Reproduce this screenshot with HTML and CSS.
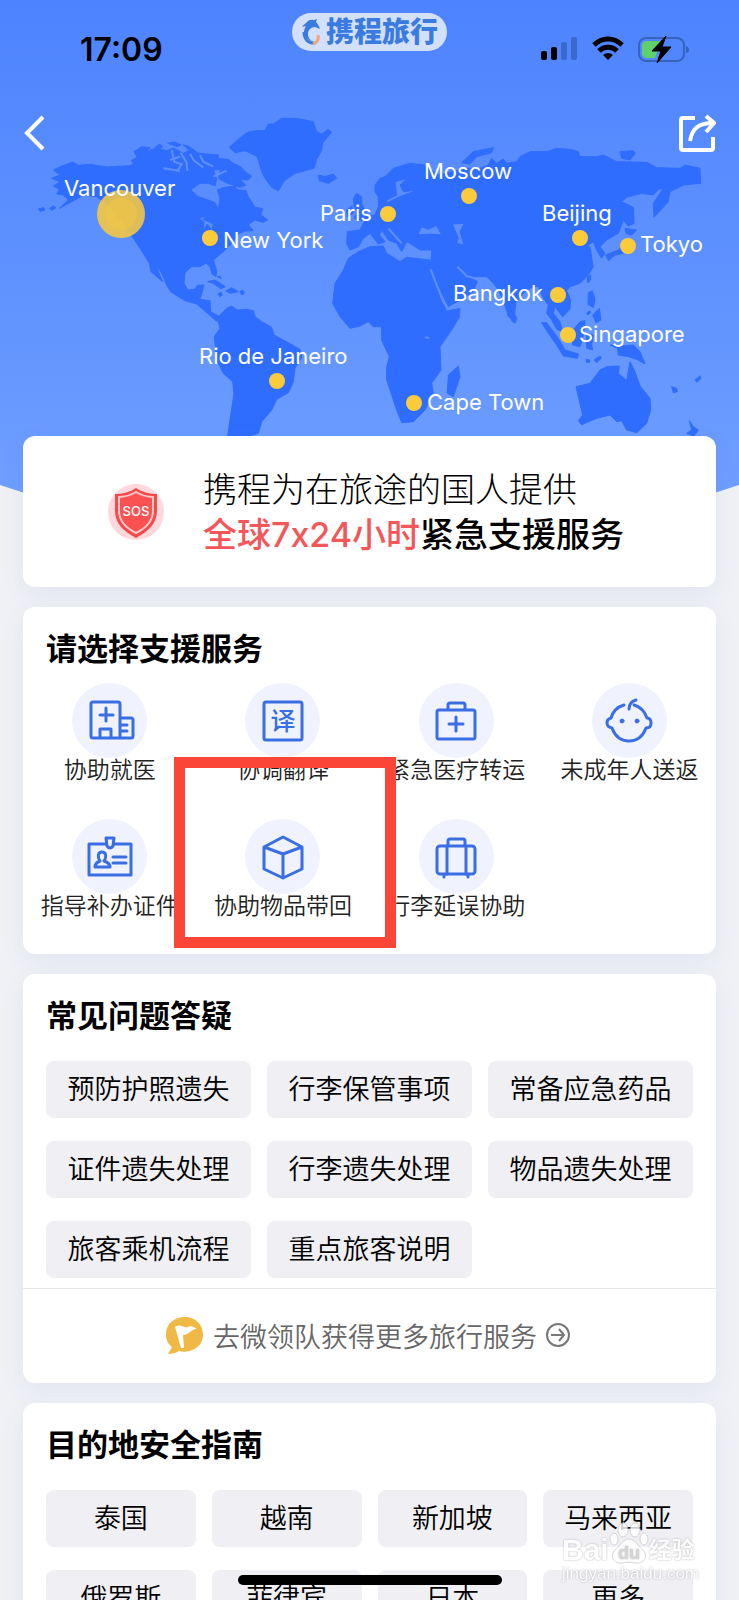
FILE: index.html
```html
<!DOCTYPE html>
<html lang="zh-CN">

<head>
    <meta charset="UTF-8">
    <meta name="viewport" content="width=device-width, initial-scale=1.0">
    <title>全球紧急支援服务</title>
    <link rel="stylesheet" href="styles.css">
</head>

<body>
    <header class="hero">
        <div class="status-bar">
            <span class="time">17:09</span>
            <div class="app-pill">
                <svg width="20" height="26" viewBox="0 0 20 26">
                    <path d="M1 8C2 6 4 5 5 4c2-3 5-4 8-3l3-1-1 3c2 2 3 4 4 7l-5-2c-4 0-7 3-7 7 0 3 1 5 4 7-5-1-8-5-8-9 0-3 1-4 2-6z" fill="#3a7be0" />
                    <path d="M3 13c0 7 4 11 10 11" fill="none" stroke="#3a7be0" stroke-width="3" />
                    <path d="M17 16c1 4 0 7-5 9" fill="none" stroke="#f0a57c" stroke-width="3" />
                </svg>
                <span>携程旅行</span>
            </div>
            <div class="status-icons">
                <svg width="37" height="25" viewBox="0 0 37 25">
                    <rect x="0" y="15" width="6" height="9" rx="2" />
                    <rect x="10" y="11" width="6" height="13" rx="2" />
                    <rect x="20" y="6" width="6" height="18" rx="2" fill="#3a68cc" />
                    <rect x="30" y="1" width="6" height="23" rx="2" fill="#3a68cc" />
                </svg>
                <svg width="32" height="25" viewBox="0 0 32 25" fill="none" stroke="#000" stroke-width="5">
                    <path d="M2 9c8-8 20-8 28 0" />
                    <path d="M7 15c5-5 13-5 18 0" />
                    <path d="M11 19q5-4 10 0l-5 5z" fill="#000" stroke="none" />
                </svg>
                <svg width="52" height="27" viewBox="0 0 52 27">
                    <rect x="1" y="2" width="45" height="23" rx="7" fill="none" stroke="#3563bd" stroke-width="2" />
                    <path d="M9 5h14l-6 17H9q-5 0-5-5v-7q0-5 5-5z" fill="#5fd16a" />
                    <path d="M48 10q3 1 3 4t-3 3z" fill="#3563bd" />
                    <path d="M28 0L14 15h9l-4 12 14-16h-9z" stroke="#000" stroke-width="1" />
                </svg>
            </div>
        </div>

        <!-- World map with city pins -->
        <svg class="map" viewBox="0 0 739 336">
            <svg width="739" height="336" viewBox="0 0 2217 1008">
                <g class="land">
                    <path fill-rule="evenodd" d="M160 210L185 198 218 186 235 196 270 193 320 201 390 197 402 190 393 182 412 172 402 155 425 140 450 143 440 155 470 143 500 152 520 144 550 160 565 152 600 160 655 165 655 175 685 178 700 190 722 200 735 215 755 228 745 240 720 238 737 256 720 262 700 256 715 270 738 272 745 290 765 322 788 326 783 344 803 360 790 367 765 360 745 374 760 392 735 393 715 402 700 425 670 455 640 480 650 512 648 530 636 522 630 500 618 489 600 500 575 500 555 518 552 550 563 570 585 568 592 556 612 555 606 578 600 598 630 602 632 635 650 645 665 655 658 662 645 660 625 642 605 625 590 612 555 602 535 590 512 575 500 555 485 520 465 490 488 545 470 530 453 515 448 490 430 460 400 415 370 370 330 320 290 290 250 285 210 308 178 325 205 300 190 285 170 282 178 268 160 258 180 245 155 235 180 225ZM572 270L600 250 625 250 645 258 650 238 640 208 662 210 655 235 682 250 712 258 672 262 652 270 660 295 655 328 645 308 620 298 595 290ZM595 355L620 348 610 358 640 372 635 392 622 372 610 390 612 365Z" />
                    <path d="M465 142l15-10 8 8-12 10zM503 130l20-4 20 8-10 6zM550 135l15 3 25 18-15 2zM115 327l16-4 4 7-14 4zM148 325l12-7 8 5-12 8z" />
                    <path d="M688 142L715 118 740 98 765 92 795 92 805 72 820 72 845 55 890 55 940 65 950 95 965 102 985 88 995 97 968 128 965 150 950 178 942 205 885 220 852 243 835 273 815 262 795 235 785 215 772 170 735 152 705 158Z" />
                    <path d="M955 225L975 230 1000 222 1010 235 985 250 958 242Z" />
                    <path d="M623 545L645 540 676 560 662 566 640 550ZM678 573L695 563 715 575 690 580ZM720 575l8-5 5 10-8 5zM655 580l8-3 4 8-8 5zM652 530l8-2 4 8z" />
                    <path d="M645 660L680 625 695 618 712 630 740 628 760 632 765 650 785 665 815 682 822 705 865 728 900 748 905 772 885 805 880 845 865 878 830 898 815 930 800 948 785 965 775 1000 750 1008 683 1008 690 960 702 880 698 845 670 820 650 780 643 710 660 685 655 665Z" />
                </g>
                <g class="land" transform="translate(1110 0)">
                    <path fill-rule="evenodd" d="M15 255L30 235 45 230 70 205 120 190 165 195 205 225 245 215 290 205 330 205 355 195 365 175 380 190 400 177 410 190 440 185 450 170 480 155 530 155 560 145 600 148 625 155 630 170 680 170 700 165 740 185 830 187 860 203 930 205 945 195 990 205 992 250 940 255 900 275 895 305 852 352 850 310 880 265 865 268 850 285 815 280 770 292 755 305 790 322 792 370 775 378 760 360 745 400 710 420 690 440 705 460 695 475 680 450 670 425 655 435 662 450 665 475 670 500 655 525 630 550 600 560 590 572 602 600 600 628 578 650 562 630 555 618 550 640 570 665 578 695 560 688 545 660 530 640 535 615 520 595 505 560 490 560 470 570 438 605 432 660 415 650 400 600 385 570 370 550 350 530 300 530 322 545 310 575 270 600 235 620 215 580 182 505 185 450 150 450 120 430 110 425 95 455 80 430 55 420 35 390 28 405 45 425 25 432 0 400 -20 415 -35 440 -60 450 -70 430 -68 395 -30 390 -20 370 -10 350 15 345 25 320 25 290 15 275ZM143 405L155 380 175 388 200 376 215 405 180 402ZM247 372L283 370 270 395 282 435 260 430 265 415ZM75 245L112 235 90 255 100 275 142 270 90 290 48 310 50 300 80 285Z" />
                    <path d="M-35 455L0 440 40 438 50 460 90 485 110 472 180 480 182 510 215 605 232 633 270 625 268 652 245 690 210 740 213 810 185 850 190 880 165 930 130 965 95 968 80 930 50 840 50 800 58 770 35 720 35 680 10 680 -5 665 -30 678 -60 685 -90 650 -112 610 -105 550 -80 510 -65 475Z" />
                    <path d="M-50 295L-40 280 -25 290 -25 310 -8 350 -25 362 -48 355 -38 335 -48 320ZM-70 330L-55 318 -50 340 -68 350Z" />
                    <path d="M275 188L310 155 370 143 365 158 320 170 300 192ZM750 155L790 152 796 160 780 180 755 175Z" />
                    <path d="M765 385L800 390 785 405 768 400ZM755 440L760 460 735 465 715 482 707 465 745 450ZM652 530l10-5 0 12-8 12zM655 578l12-5 8 25-5 25-16-10zM668 645l20-20 5 35-15 8zM650 640l8-8 4 5-8 8z" />
                    <path d="M515 668L530 668 565 715 585 750 625 762 622 775 580 768 560 735 535 700ZM605 695L630 665 645 662 640 705 630 740 608 735ZM650 700L670 705 665 735 668 750 650 745ZM648 778l12 2-2 7-8 0zM672 780l18-12 5 5-15 15z" />
                    <path d="M720 735L760 738 790 735 810 755 825 792 800 778 775 770 745 765 742 745ZM905 860l15 5 2 10-12 3zM975 840l15-13 3 8-12 12z" />
                    <path d="M618 860L660 850 690 810 710 800 748 798 745 820 770 842 780 785 795 815 810 858 840 895 842 930 830 970 800 998 770 990 755 962 740 965 720 945 680 955 635 974 625 962 638 945ZM958 962L970 980 985 990 972 1008 950 1000 965 990ZM265 798L270 830 250 890 232 880 235 825Z" />
                    <path d="M415 630l15 5 10 20-4 14-10-5z" />
                    <path class="water" d="M182 508L200 555 220 605M228 628L268 618M262 500L290 528 315 535M55 385L95 430M165 712l12 2" />
                </g>
                <g class="water">
                    <path d="M515 150l8 35 22 8-12 18M542 158l18 30 2 25M570 162l12 20 28 20M600 165l10 20 30 15M490 205l50 8M510 180l30-10M640 230l40-18" />
                </g>
            </svg>
            <g class="pins">
                <circle cx="121" cy="114" r="24" opacity=".85" />
                <circle cx="121" cy="114" r="16" opacity=".4" />
                <circle cx="210" cy="138" r="8" />
                <circle cx="277" cy="281" r="8" />
                <circle cx="388" cy="114" r="8" />
                <circle cx="469" cy="96" r="8" />
                <circle cx="580" cy="138" r="8" />
                <circle cx="628" cy="146" r="8" />
                <circle cx="558" cy="195" r="8" />
                <circle cx="568" cy="235" r="8" />
                <circle cx="414" cy="303" r="8" />
            </g>
            <g class="cities">
                <text x="64" y="96">Vancouver</text>
                <text x="223" y="148">New York</text>
                <text x="199" y="264">Rio de Janeiro</text>
                <text x="320" y="121">Paris</text>
                <text x="424" y="79">Moscow</text>
                <text x="542" y="121">Beijing</text>
                <text x="640" y="152">Tokyo</text>
                <text x="453" y="201">Bangkok</text>
                <text x="579" y="242">Singapore</text>
                <text x="427" y="310">Cape Town</text>
            </g>
        </svg>

        <nav class="nav">
            <button type="button" aria-label="返回">
                <svg width="22" height="38" viewBox="0 0 22 38">
                    <path d="M20 3L4 19l16 16" />
                </svg>
            </button>
            <button type="button" aria-label="分享">
                <svg width="38" height="38" viewBox="0 0 38 38">
                    <path d="M17 4H5q-2 0-2 2v28q0 2 2 2h28q2 0 2-2V23" />
                    <path d="M12 27C14 15 20 9 35 9M28 2l8 7-8 9" />
                </svg>
            </button>
        </nav>
    </header>

    <main>
        <section class="card banner">
            <svg class="shield" width="56" height="56" viewBox="0 0 56 56">
                <circle cx="28" cy="28" r="28" fill="#fdd9db" />
                <path d="M28 4c6 4 13 6 21 6v17c0 12-8 20-21 27C15 47 7 39 7 27V10c8 0 15-2 21-6z" fill="#f6494c" />
                <path d="M28 8c5 3 11 5 17 5v14c0 10-7 17-17 22-10-5-17-12-17-22V13c6 0 12-2 17-5z" fill="#fc5153" stroke="#ffc9c9" stroke-width="2" />
                <text x="28" y="32" text-anchor="middle">SOS</text>
            </svg>
            <p>携程为在旅途的国人提供<br><strong><em>全球7x24小时</em>紧急支援服务</strong></p>
        </section>

        <section class="card">
            <h2>请选择支援服务</h2>
            <div class="services">
                <a href="#">
                    <span class="icon"><svg viewBox="0 0 44 44"><path d="M3 5q0-2 2-2h25q2 0 2 2v34H5q-2 0-2-2zM32 19h11q2 0 2 2v16q0 2-2 2H32M12 39v-9h11v9M18 9v13M12 16h13M33 26h6M33 32h6" /></svg></span>
                    <span>协助就医</span>
                </a>
                <a href="#">
                    <span class="icon"><svg viewBox="0 0 44 44"><rect x="3" y="3" width="38" height="38" rx="2" /><text x="22" y="31" text-anchor="middle">译</text></svg></span>
                    <span>协调翻译</span>
                </a>
                <a href="#">
                    <span class="icon"><svg viewBox="0 0 44 44"><rect x="3" y="11" width="38" height="29" rx="2" /><path d="M14 10V6q0-2 2-2h13q2 0 2 2v4M22 18v14M15 25h14" /></svg></span>
                    <span>紧急医疗转运</span>
                </a>
                <a href="#">
                    <span class="icon"><svg class="baby" viewBox="0 0 50 44"><path d="M20 6C13 8 9 12 7 19q-4 1-4 5t5 5c3 8 9 13 17 13s14-5 17-13q5 0 5-5t-4-5C41 13 37 8 30 6M25 10q0-7 7-9" /><circle class="dot" cx="18" cy="22" r="2" /><circle class="dot" cx="33" cy="22" r="2" /></svg></span>
                    <span>未成年人送返</span>
                </a>
                <a href="#">
                    <span class="icon"><svg viewBox="0 0 44 44"><path d="M17 9H1v31h42V9H27M18 3h8l-1 8q-3 4-6 0zM7 32q0-4 5-6c-3-4-2-9 2-9s5 5 2 9q6 2 6 6zM25 22h13M25 28h13" /></svg></span>
                    <span>指导补办证件</span>
                </a>
                <a href="#" class="marked">
                    <span class="icon"><svg viewBox="0 0 44 44"><path d="M22 2l19 10v22L22 43 3 34V12zM3 12l19 7 19-7M22 19v24" /></svg></span>
                    <span>协助物品带回</span>
                </a>
                <a href="#">
                    <span class="icon"><svg viewBox="0 0 44 44"><rect x="3" y="11" width="38" height="28" rx="3" /><path d="M14 10V6q0-2 2-2h13q2 0 2 2v4M13 11v28M32 11v28M10 40v2M34 40v2" /></svg></span>
                    <span>行李延误协助</span>
                </a>
            </div>
        </section>

        <section class="card">
            <h2>常见问题答疑</h2>
            <div class="chips three">
                <button type="button">预防护照遗失</button>
                <button type="button">行李保管事项</button>
                <button type="button">常备应急药品</button>
                <button type="button">证件遗失处理</button>
                <button type="button">行李遗失处理</button>
                <button type="button">物品遗失处理</button>
                <button type="button">旅客乘机流程</button>
                <button type="button">重点旅客说明</button>
            </div>
            <a href="#" class="more">
                <svg width="39" height="39" viewBox="0 0 39 39">
                    <path d="M20 1C9 1 1 8 1 18c0 6 2 10 6 13L3 38c5 0 8-1 11-3 13 3 24-5 24-16C38 8 30 1 20 1z" fill="#f0b845" />
                    <path d="M10 11c6-4 9 2 13 0 3-2 6 0 9 2-7 0-7 6-14 6l1 13h-3z" fill="#fff" />
                </svg>
                <span>去微领队获得更多旅行服务</span>
                <svg width="24" height="24" viewBox="0 0 24 24" fill="none" stroke="#777" stroke-width="2">
                    <circle cx="12" cy="12" r="11" />
                    <path d="M5 12h13M13 6l5 6-5 6" />
                </svg>
            </a>
        </section>

        <section class="card">
            <h2>目的地安全指南</h2>
            <div class="chips four">
                <button type="button">泰国</button>
                <button type="button">越南</button>
                <button type="button">新加坡</button>
                <button type="button">马来西亚</button>
                <button type="button">俄罗斯</button>
                <button type="button">菲律宾</button>
                <button type="button">日本</button>
                <button type="button">更多</button>
            </div>
        </section>
    </main>

    <div class="watermark">
        <div class="brand">
            <span>Bai</span>
            <svg width="40" height="42" viewBox="0 0 40 42">
                <ellipse cx="5" cy="17" rx="4" ry="6" />
                <ellipse cx="14" cy="8" rx="5" ry="7" />
                <ellipse cx="26" cy="8" rx="5" ry="7" />
                <ellipse cx="35" cy="17" rx="4" ry="6" />
                <path d="M20 17c6 0 8 6 13 10 7 6 3 15-6 14-5-1-9-1-14 0-9 1-13-8-6-14 5-4 7-10 13-10z" />
                <text x="20" y="37" text-anchor="middle">du</text>
            </svg>
            <span class="cn">经验</span>
        </div>
        <div class="site">jingyan.baidu.com</div>
    </div>
    <div class="home-indicator"></div>
</body>

</html>
```
FILE: styles.css
```css
/* General Reset */
*, *::after {
    margin: 0;
    padding: 0;
    box-sizing: border-box;
}

body {
    height: 100vh;
    overflow: hidden;
    font-family: Inter, "Noto Sans CJK SC", sans-serif;
    color: #000;
    background: #f0f1f5;
}

a {
    color: inherit;
    text-decoration: none;
}

button {
    border: none;
    background: none;
    font: inherit;
    color: inherit;
    cursor: pointer;
}

/* Blue top area */
.hero {
    position: relative;
    height: 509px;
    background: linear-gradient(#4d83ff, #6f9fff);
    clip-path: polygon(0 0, 100% 0, 100% 485px, 90% 100%, 10% 100%, 0 485px);
}

.status-bar {
    display: grid;
    grid-template-columns: 1fr auto 1fr;
    height: 100px;
    padding: 13px 49px 0;
}

.time {
    padding: 17px 0 0 31px;
    font-size: 32px;
    line-height: 40px;
    font-weight: 600;
}

.app-pill {
    display: flex;
    align-items: center;
    gap: 5px;
    height: 38px;
    padding: 0 9px;
    border-radius: 19px;
    background: #d3e0fb;
    color: #3a7be0;
    font-size: 28px;
    line-height: 38px;
    font-weight: 900;
}

.status-icons {
    display: flex;
    justify-content: flex-end;
    gap: 14px;
    padding-top: 23px;
}

.map {
    position: absolute;
    top: 100px;
    left: 0;
    width: 100%;
}

.land {
    fill: #2f6dfe;
    stroke: #2f6dfe;
    stroke-width: 3;
    stroke-linejoin: round;
}

.water {
    fill: none;
    stroke: #5f90ff;
    stroke-width: 6;
}

.pins {
    fill: #fbcb3b;
}

.cities {
    fill: #fff;
    font-size: 22px;
    font-weight: 400;
}

.nav {
    position: relative;
    display: flex;
    justify-content: space-between;
    padding: 14px 23px;
}

.nav svg {
    display: block;
    fill: none;
    stroke: #fff;
    stroke-width: 4;
}

/* Cards */
main {
    position: relative;
    display: flex;
    flex-direction: column;
    gap: 20px;
    margin-top: -73px;
    padding: 0 23px;
}

.card {
    border-radius: 12px;
    background: #fff;
    box-shadow: 0 8px 24px rgba(70, 100, 220, 0.08);
}

.card h2 {
    padding: 24px 23px 0;
    font-size: 31px;
    line-height: 36px;
    font-weight: 700;
}

.banner {
    display: flex;
    align-items: center;
    gap: 39px;
    height: 151px;
    padding: 0 23px 0 85px;
}

.banner p {
    font-size: 34px;
    line-height: 45px;
    font-weight: 300;
}

.banner strong {
    font-weight: 500;
}

.banner em {
    color: #f4575a;
    font-style: normal;
}

.shield text {
    fill: #fff;
    font-size: 13px;
    font-weight: 500;
}

/* Services */
.services {
    display: grid;
    grid-template-columns: repeat(4, 1fr);
    row-gap: 37px;
    padding: 16px 0 36px;
}

.services a {
    position: relative;
    display: flex;
    flex-direction: column;
    align-items: center;
    font-size: 23px;
    line-height: 24px;
    font-weight: 350;
    color: #222;
    white-space: nowrap;
}

.icon {
    display: flex;
    align-items: center;
    justify-content: center;
    width: 75px;
    height: 75px;
    border-radius: 50%;
    background: #f0f3fe;
}

.icon svg {
    width: 44px;
    height: 44px;
    overflow: visible;
    fill: none;
    stroke: #3a6fe4;
    stroke-width: 3;
    stroke-linecap: round;
    stroke-linejoin: round;
}

.icon .baby {
    width: 50px;
}

.icon text {
    fill: #3a6fe4;
    stroke: none;
    font-size: 25px;
    font-weight: 500;
}

.icon .dot {
    fill: #3a6fe4;
    stroke-width: 1;
}

.marked {
    z-index: 1;
}

/* Red frame round the picked service */
.marked::after {
    content: "";
    position: absolute;
    top: -62px;
    left: -22px;
    right: -26px;
    height: 191px;
    border: 11px solid #fb4637;
}

/* Chips */
.chips {
    display: grid;
    gap: 23px 16px;
    padding: 27px 23px 10px;
}

.three {
    grid-template-columns: repeat(3, 1fr);
}

.four {
    grid-template-columns: repeat(4, 1fr);
}

.chips button {
    height: 57px;
    border-radius: 8px;
    background: #efeff4;
    font-size: 27px;
    line-height: 36px;
    font-weight: 350;
    white-space: nowrap;
}

.more {
    display: flex;
    align-items: center;
    justify-content: center;
    gap: 9px;
    height: 95px;
    padding: 0 4px 2px 0;
    border-top: 1px solid #e6e7ea;
    font-size: 27px;
    font-weight: 350;
    color: #666;
}

/* Overlays */
.watermark {
    position: fixed;
    right: 40px;
    bottom: 16px;
    color: #fff;
    font-family: "Liberation Sans", "Noto Sans CJK SC", sans-serif;
    text-shadow: 0 0 2px #999;
    opacity: 0.8;
}

.brand {
    display: flex;
    align-items: flex-end;
    font-size: 30px;
    line-height: 28px;
    font-weight: 700;
}

.brand svg {
    fill: #fff;
    stroke: #ccc;
}

.brand text {
    fill: #ccc;
    stroke: none;
    font-size: 18px;
}

.brand .cn {
    font-size: 23px;
}

.site {
    font-size: 17px;
    line-height: 20px;
}

.home-indicator {
    position: fixed;
    bottom: 15px;
    left: 50%;
    width: 264px;
    height: 10px;
    margin-left: -132px;
    border-radius: 5px;
    background: #000;
}
```
